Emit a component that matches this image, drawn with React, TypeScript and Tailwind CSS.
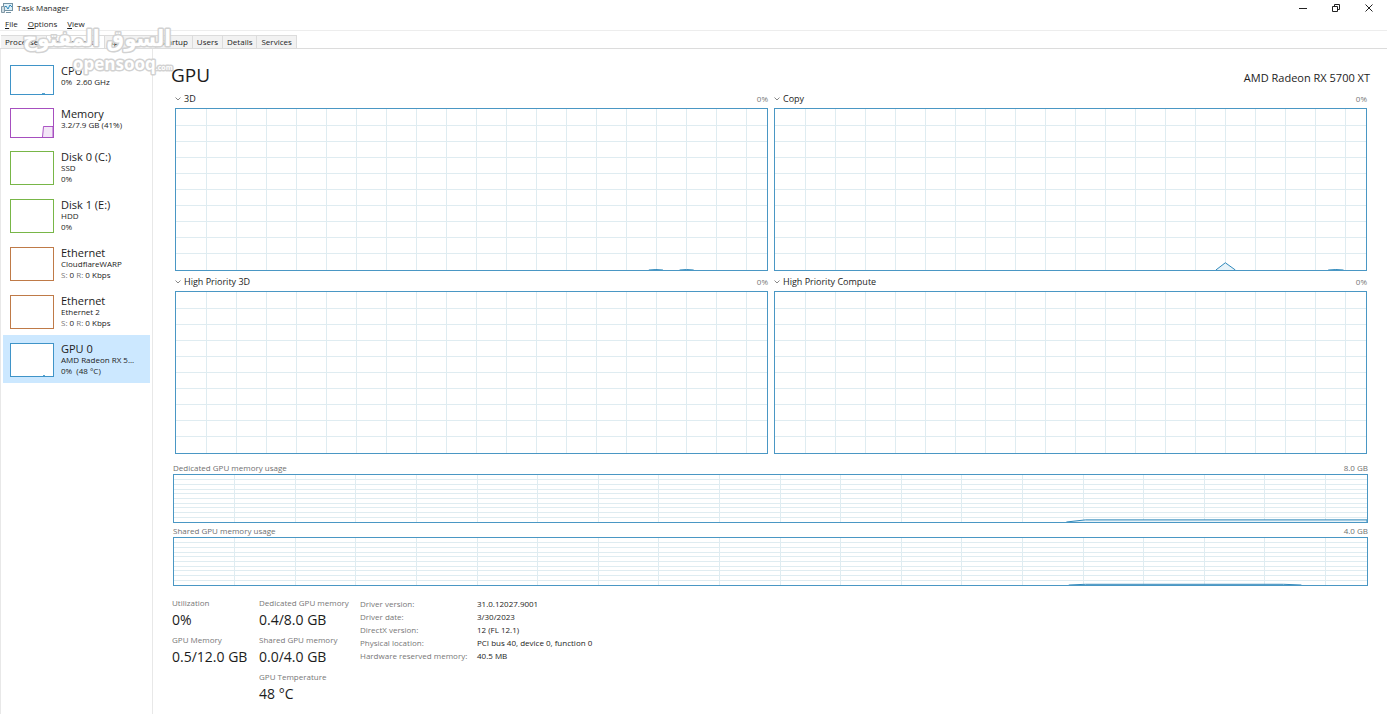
import React from 'react';

const grid = Array.from({ length: 19 }, (_, i) => (i + 1) * 50.8);
const rows = [10, 20, 30, 40, 50, 60, 70, 80, 90];

const menus = ['File', 'Options', 'View'];

const tabs = ['Processes', 'Performance', 'App history', 'Startup', 'Users', 'Details', 'Services'];

interface Device {
  name: string;
  lines: React.ReactNode[];
  box: string;
  spark?: string;
  selected?: boolean;
}

const traffic = (
  <>
    <span className="text-[#777]">S:</span> 0 <span className="text-[#777]">R:</span> 0 Kbps
  </>
);

const devices: Device[] = [
  { name: 'CPU', lines: ['0%  2.60 GHz'], box: 'border-[#3f94c8] text-[#117dbb]', spark: 'M31 27.5 H34' },
  { name: 'Memory', lines: ['3.2/7.9 GB (41%)'], box: 'border-[#a64fbf] text-[#8b12ae]', spark: 'M31.5 28 L32.5 17.5 H42 V28' },
  { name: 'Disk 0 (C:)', lines: ['SSD', '0%'], box: 'border-[#78b648] text-[#4da60c]' },
  { name: 'Disk 1 (E:)', lines: ['HDD', '0%'], box: 'border-[#78b648] text-[#4da60c]' },
  { name: 'Ethernet', lines: ['CloudflareWARP', traffic], box: 'border-[#bf7a48] text-[#a74f01]' },
  { name: 'Ethernet', lines: ['Ethernet 2', traffic], box: 'border-[#bf7a48] text-[#a74f01]' },
  { name: 'GPU 0', lines: ['AMD Radeon RX 5...', '0%  (48 °C)'], box: 'border-[#3f94c8] text-[#117dbb]', spark: 'M32 31.5 H34', selected: true },
];

const engines = [
  { name: '3D', data: 'M800 100 L812 99.7 L824 100 M852 100 L864 99.7 L876 100' },
  { name: 'Copy', data: 'M746 100 L762 95.5 L779 100 M936 100 L949 99.7 L962 100' },
  { name: 'High Priority 3D', data: '' },
  { name: 'High Priority Compute', data: '' },
];

const stats = [
  [
    { label: 'Utilization', value: '0%' },
    { label: 'GPU Memory', value: '0.5/12.0 GB' },
  ],
  [
    { label: 'Dedicated GPU memory', value: '0.4/8.0 GB' },
    { label: 'Shared GPU memory', value: '0.0/4.0 GB' },
    { label: 'GPU Temperature', value: '48 °C' },
  ],
];

const details = [
  ['Driver version:', '31.0.12027.9001'],
  ['Driver date:', '3/30/2023'],
  ['DirectX version:', '12 (FL 12.1)'],
  ['Physical location:', 'PCI bus 40, device 0, function 0'],
  ['Hardware reserved memory:', '40.5 MB'],
];

const Chart: React.FC<{ data: string; className: string }> = ({ data, className }) => (
  <div className={`border border-[#4a97c4] ${className}`}>
    <svg className="block w-full h-full" viewBox="0 0 1000 100" preserveAspectRatio="none">
      <g stroke="#dfecf1" strokeWidth="1" shapeRendering="crispEdges">
        {grid.map((x) => (
          <line key={x} x1={x} x2={x} y1="0" y2="100" vectorEffect="non-scaling-stroke" />
        ))}
        {rows.map((y) => (
          <line key={y} x1="0" x2="1000" y1={y} y2={y} vectorEffect="non-scaling-stroke" />
        ))}
      </g>
      <path d={data} fill="#e8f3f9" stroke="#2f88bb" strokeWidth="1" vectorEffect="non-scaling-stroke" />
    </svg>
  </div>
);

const Watermark: React.FC = () => (
  <svg
    className="absolute left-5 top-4 w-40 h-16 overflow-visible pointer-events-none"
    viewBox="0 0 160 64"
    fill="#fff"
    stroke="#d2d2d2"
    strokeWidth="3"
    strokeLinejoin="round"
    paintOrder="stroke"
  >
    <text
      x="77"
      y="30"
      fontSize="22"
      fontWeight="bold"
      textAnchor="middle"
      direction="rtl"
      fontFamily="'DejaVu Sans Condensed', 'DejaVu Sans', sans-serif"
    >
      السوق المفتوح
    </text>
    <text x="53" y="54" fontSize="17" fontWeight="bold" fontFamily="'Open Sans', sans-serif">
      opensooq<tspan fontSize="7">.com</tspan>
    </text>
  </svg>
);

const App: React.FC = () => {
  return (
    <div className="relative min-h-screen bg-white text-[#1c1c1c] font-['Open_Sans','Noto_Sans',sans-serif]">
      {/* Title bar */}
      <header className="flex items-center h-4 pl-px pr-[14px]">
        <svg className="w-3 h-3 mr-1" viewBox="0 0 12 12" fill="none">
          <rect x="2.5" y="1.5" width="9" height="7" fill="#dff0f8" stroke="#7392a3" />
          <path d="M3 6 L5 4 L7 7 L9 3 L11 5" stroke="#2f88bb" />
          <path d="M0.5 4.5 h3 v6 h-3 z" fill="#cfdde4" stroke="#8299a6" />
          <path d="M5 10.5 h5" stroke="#7392a3" />
        </svg>
        <h1 className="text-[8px] leading-4">Task Manager</h1>
        <div className="flex items-center gap-[25px] ml-auto">
          <button aria-label="Minimize">
            <svg className="w-2 h-2" viewBox="0 0 8 8" stroke="#222"><path d="M0 4.5 H8" /></svg>
          </button>
          <button aria-label="Restore">
            <svg className="w-2 h-2" viewBox="0 0 8 8" fill="none" stroke="#222">
              <path d="M0.5 2.5 h5 v5 h-5 z M2.5 2 V0.5 H7.5 V5.5 H6" />
            </svg>
          </button>
          <button aria-label="Close">
            <svg className="w-2 h-2" viewBox="0 0 8 8" stroke="#222"><path d="M0.5 0.5 L7.5 7.5 M7.5 0.5 L0.5 7.5" /></svg>
          </button>
        </div>
      </header>

      {/* Menu */}
      <nav className="flex gap-[10px] h-[15px] pl-[5px] border-b border-[#ededed] text-[8px] leading-4">
        {menus.map((menu) => (
          <button key={menu}>
            <span className="underline">{menu[0]}</span>
            {menu.slice(1)}
          </button>
        ))}
      </nav>

      {/* Tabs */}
      <div role="tablist" className="flex items-end h-[18px] pl-px border-b border-[#dcdcdc] text-[8px] leading-3">
        {tabs.map((tab) => (
          <button
            key={tab}
            role="tab"
            aria-selected={tab === 'Performance'}
            className={`h-[13px] px-1 border-r border-t border-[#dcdcdc] ${tab === 'Performance' ? 'bg-white' : 'bg-[#f2f2f2]'}`}
          >
            {tab}
          </button>
        ))}
      </div>

      <div className="flex">
        {/* Device list */}
        <aside className="w-[153px] shrink-0 min-h-[665px] pt-2 px-[2px] border-x border-[#e8e8e8]">
          {devices.map((device, i) => (
            <button
              key={i}
              className={`flex items-start w-full pl-[7px] pt-2 text-left ${device.lines.length > 1 ? 'h-12' : 'h-[43px]'} ${device.selected ? 'bg-[#cce8ff]' : ''}`}
            >
              <span className={`block shrink-0 w-11 border bg-white ${device.lines.length > 1 ? 'h-[34px]' : 'h-[30px]'} ${device.box}`}>
                {device.spark && (
                  <svg className="block w-full h-full" fill="currentColor" fillOpacity="0.1" stroke="currentColor" strokeOpacity="0.7">
                    <path d={device.spark} />
                  </svg>
                )}
              </span>
              <span className="block pl-[7px] whitespace-pre">
                <span className="block text-[11px] leading-[11px]">{device.name}</span>
                {device.lines.map((line, n) => (
                  <span key={n} className="block text-[8px] leading-[11px]">{line}</span>
                ))}
              </span>
            </button>
          ))}
        </aside>

        {/* GPU details */}
        <main className="flex-1 min-w-0 pl-[18px] pr-[17px] pt-3">
          <div className="flex items-end justify-between h-[27px]">
            <h2 className="text-[19px] leading-[26px]">GPU</h2>
            <span className="text-[11px] leading-5">AMD Radeon RX 5700 XT</span>
          </div>

          <div className="grid grid-cols-2 gap-x-[6px] pl-1 pr-[3px]">
            {engines.map((engine) => (
              <section key={engine.name}>
                <div className="flex items-center h-5 pt-[2px] text-[9px] leading-3">
                  <button className="flex items-center gap-[3px]">
                    <svg className="w-[6px] h-[6px]" viewBox="0 0 6 6" fill="none" stroke="#888">
                      <path d="M0.5 1.5 L3 4 L5.5 1.5" />
                    </svg>
                    {engine.name}
                  </button>
                  <span className="ml-auto text-[8px] text-[#777]">0%</span>
                </div>
                <Chart data={engine.data} className="h-[163px]" />
              </section>
            ))}
          </div>

          <div className="pl-[2px] pr-[2px] pt-1">
            <div className="flex justify-between pt-1 text-[8px] leading-3 text-[#707070]">
              <span>Dedicated GPU memory usage</span>
              <span>8.0 GB</span>
            </div>
            <Chart data="M748 100 L764 95.5 H1000 V100" className="h-[49px]" />
            <div className="flex justify-between pt-[2px] text-[8px] leading-3 text-[#707070]">
              <span>Shared GPU memory usage</span>
              <span>4.0 GB</span>
            </div>
            <Chart data="M750 100 L764 98.5 H930 L945 100" className="h-[49px]" />
          </div>

          <div className="flex pt-[11px] pl-px">
            {stats.map((column, i) => (
              <div key={i} className={i === 0 ? 'w-[87px]' : 'w-[101px]'}>
                {column.map((stat) => (
                  <div key={stat.label} className="h-[37px] whitespace-nowrap">
                    <p className="text-[8px] leading-3 text-[#777]">{stat.label}</p>
                    <p className="text-[14px] leading-[22px]">{stat.value}</p>
                  </div>
                ))}
              </div>
            ))}
            <dl className="grid grid-cols-[117px_auto] content-start text-[8px] leading-[13px]">
              {details.map(([label, value]) => (
                <React.Fragment key={label}>
                  <dt className="text-[#777]">{label}</dt>
                  <dd>{value}</dd>
                </React.Fragment>
              ))}
            </dl>
          </div>
        </main>
      </div>

      <Watermark />
    </div>
  );
};

export default App;
